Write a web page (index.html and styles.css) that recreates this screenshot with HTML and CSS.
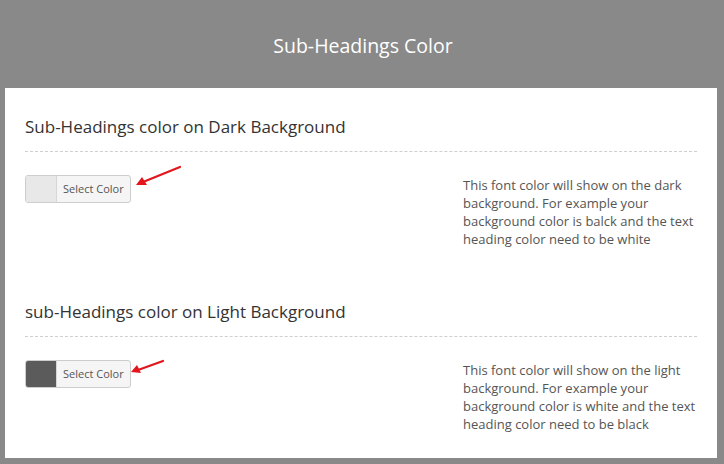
FILE: index.html
```html
<!DOCTYPE html>
<html lang="en">
  <head>
    <meta charset="UTF-8" />
    <meta name="viewport" content="width=device-width, initial-scale=1.0" />
    <title>Sub-Headings Color</title>
    <link rel="stylesheet" href="styles.css">
  </head>
  <body>
    <div class="page">
      <div class="page-header">
        <h2>Sub-Headings Color</h2>
      </div>
      <div class="panel">
        <div class="section">
          <h3>Sub-Headings color on Dark Background</h3>
          <div class="section-row">
            <div class="picker-wrap">
              <button class="picker" type="button">
                <span class="swatch swatch-light"></span>
                <span class="picker-label">Select Color</span>
              </button>
              <svg class="arrow arrow-long" width="50" height="24" viewBox="0 0 50 24">
                <line x1="47" y1="2" x2="10" y2="17" stroke="#e3161c" stroke-width="2.2" stroke-linecap="round" />
                <polygon points="3,20 9,12 14,20" fill="#e3161c" />
              </svg>
            </div>
            <p class="desc">This font color will show on the dark background. For example your background color is balck and the text heading color need to be white</p>
          </div>
        </div>
        <div class="section">
          <h3>sub-Headings color on Light Background</h3>
          <div class="section-row">
            <div class="picker-wrap">
              <button class="picker" type="button">
                <span class="swatch swatch-dark"></span>
                <span class="picker-label">Select Color</span>
              </button>
              <svg class="arrow arrow-short" width="36" height="16" viewBox="0 0 36 16">
                <line x1="33" y1="2" x2="8" y2="11" stroke="#e3161c" stroke-width="2.2" stroke-linecap="round" />
                <polygon points="1,13 7,6 11,14" fill="#e3161c" />
              </svg>
            </div>
            <p class="desc">This font color will show on the light background. For example your background color is white and the text heading color need to be black</p>
          </div>
        </div>
      </div>
    </div>
  </body>
</html>
```

FILE: styles.css
```css
* {
  margin: 0;
  padding: 0;
  box-sizing: border-box;
}

body {
  font-family: "Open Sans", Arial, sans-serif;
  background-color: #898989;
  width: 724px;
  height: 464px;
  overflow: hidden;
}

.page {
  padding: 0 7px 6px 5px;
}

.page-header {
  height: 88px;
  display: flex;
  align-items: center;
  justify-content: center;
}

.page-header h2 {
  color: #fff;
  font-size: 19.5px;
  font-weight: 400;
  line-height: 28px;
  margin-top: 4px;
  margin-left: 4px;
}

.panel {
  background: #fff;
  height: 370px;
  padding: 27px 20px 0 20px;
}

.section {
  height: 185px;
}

.section h3 {
  font-size: 17px;
  font-weight: 400;
  color: #333;
  line-height: 24px;
  padding-bottom: 12px;
  border-bottom: 1px dashed #cfcfcf;
}

.section-row {
  display: flex;
  justify-content: space-between;
  align-items: flex-start;
  margin-top: 23px;
}

.picker-wrap {
  position: relative;
}

.picker {
  display: flex;
  height: 28px;
  border: 1px solid #cdcdcd;
  border-radius: 3px;
  background: #f5f5f5;
  overflow: hidden;
  cursor: pointer;
  font-family: inherit;
}

.swatch {
  width: 31px;
  height: 100%;
  border-right: 1px solid #d6d6d6;
}

.swatch-light {
  background: #e8e8e8;
}

.swatch-dark {
  background: #5b5b5b;
}

.picker-label {
  font-size: 11px;
  color: #555;
  line-height: 26px;
  padding: 0 6px 0 6px;
}

.arrow {
  position: absolute;
  pointer-events: none;
}

.arrow-long {
  left: 108px;
  top: -10px;
}

.arrow-short {
  left: 105px;
  top: -1px;
}

.desc {
  width: 234px;
  font-size: 13px;
  line-height: 18px;
  color: #555;
  margin-top: 1px;
}
```
